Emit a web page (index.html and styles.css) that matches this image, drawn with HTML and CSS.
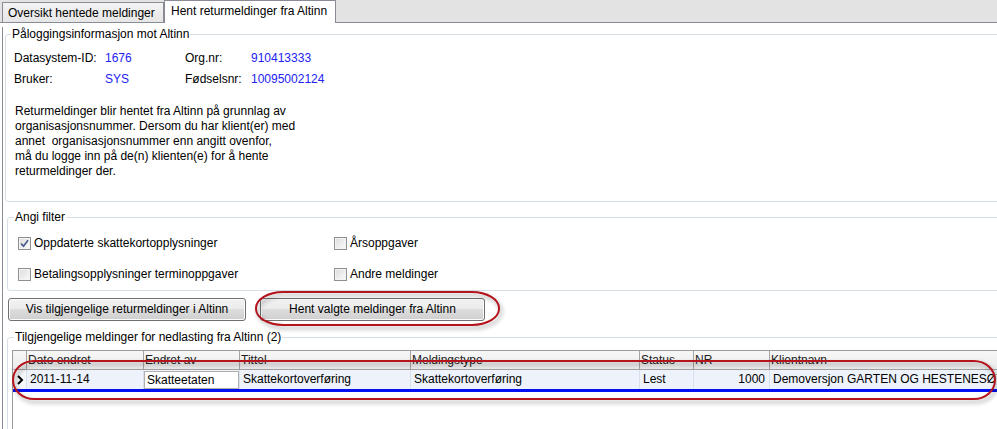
FILE: index.html
```html
<!DOCTYPE html>
<html lang="no">
<head>
<meta charset="utf-8">
<title>Hent returmeldinger fra Altinn</title>
<link rel="stylesheet" href="styles.css">
</head>
<body>
<div class="window">
  <div class="tabstrip">
    <div class="tab">Oversikt hentede meldinger</div>
    <div class="tab tab-active">Hent returmeldinger fra Altinn</div>
  </div>
  <div class="panel">
    <fieldset class="group group-login">
      <legend>Påloggingsinformasjon mot Altinn</legend>
      <div class="info">
        <span>Datasystem-ID:</span><span class="val">1676</span><span>Org.nr:</span><span class="val">910413333</span>
        <span>Bruker:</span><span class="val">SYS</span><span>Fødselsnr:</span><span class="val">10095002124</span>
      </div>
      <p class="note">Returmeldinger blir hentet fra Altinn på grunnlag av<br>organisasjonsnummer. Dersom du har klient(er) med<br>annet&nbsp; organisasjonsnummer enn angitt ovenfor,<br>må du logge inn på de(n) klienten(e) for å hente<br>returmeldinger der.</p>
    </fieldset>
    <fieldset class="group group-filter">
      <legend>Angi filter</legend>
      <div class="filters">
        <label class="check"><span class="box"><svg width="11" height="11" viewBox="0 0 11 11"><path d="M2 5.5 L4.5 8.2 L9 2.2" fill="none" stroke="#4a5c8c" stroke-width="1.7"/></svg></span>Oppdaterte skattekortopplysninger</label>
        <label class="check"><span class="box"></span>Årsoppgaver</label>
        <label class="check"><span class="box"></span>Betalingsopplysninger terminoppgaver</label>
        <label class="check"><span class="box"></span>Andre meldinger</label>
      </div>
    </fieldset>
    <div class="actions">
      <button class="btn btn-vis">Vis tilgjengelige returmeldinger i Altinn</button>
      <span class="marked"><button class="btn btn-hent">Hent valgte meldinger fra Altinn</button><span class="ring ring-btn"></span></span>
    </div>
    <fieldset class="group group-list">
      <legend>Tilgjengelige meldinger for nedlasting fra Altinn (2)</legend>
      <div class="grid">
        <div class="row head">
          <div class="cell rh"></div>
          <div class="cell">Dato endret</div>
          <div class="cell">Endret av</div>
          <div class="cell">Tittel</div>
          <div class="cell">Meldingstype</div>
          <div class="cell">Status</div>
          <div class="cell">NR</div>
          <div class="cell">Klientnavn</div>
        </div>
        <div class="row data">
          <div class="cell rh"><svg width="7" height="10" viewBox="0 0 7 10"><path d="M1 1 L5 5 L1 9" fill="none" stroke="#000" stroke-width="2"/></svg></div>
          <div class="cell">2011-11-14</div>
          <div class="cell cell-edit"><div class="edit">Skatteetaten</div></div>
          <div class="cell">Skattekortoverføring</div>
          <div class="cell">Skattekortoverføring</div>
          <div class="cell">Lest</div>
          <div class="cell num">1000</div>
          <div class="cell">Demoversjon GARTEN OG HESTENESØY AS</div>
        </div>
        <span class="ring ring-row"></span>
      </div>
    </fieldset>
  </div>
</div>
</body>
</html>
```

FILE: styles.css
```css
* { box-sizing: border-box; }

html, body {
  margin: 0;
  padding: 0;
}

body {
  width: 997px;
  height: 429px;
  overflow: hidden;
  background: #ffffff;
  font-family: "Liberation Sans", Arial, sans-serif;
  font-size: 12px;
  color: #000;
}

.window {
  width: 997px;
  height: 429px;
  overflow: hidden;
}

.tabstrip {
  display: flex;
  align-items: flex-end;
  height: 23px;
  padding-left: 2px;
  background: #e3e3e3;
  border-bottom: 1px solid #898c95;
}

.tab {
  height: 20px;
  padding: 3px 6px 0 5px;
  line-height: 15px;
  white-space: nowrap;
  border: 1px solid #898c95;
  border-bottom: none;
  background: linear-gradient(#f3f3f3, #e6e6e6);
  width: 162px;
}

.tab-active {
  height: 23px;
  margin-bottom: -1px;
  padding: 3px 6px 0 6px;
  width: 172px;
  background: #ffffff;
  position: relative;
  z-index: 1;
}

.panel {
  margin-left: 2px;
  border-left: 1px solid #898c95;
  height: 406px;
  background: #fff;
  width: 1060px;
}

.group {
  margin: 0;
  padding: 0;
  border: 1px solid #d5dfe5;
  border-radius: 3px;
  min-inline-size: 0;
  width: 1040px;
}

.group legend {
  padding: 0 1px;
  margin-left: 5px;
  line-height: 14px;
  font-size: 12px;
}

.group-login {
  margin: 4px 0 0 2px;
  padding-bottom: 22px;
}

.info {
  display: grid;
  grid-template-columns: 91px 80px 66px auto;
  row-gap: 6px;
  margin: 10px 0 0 8px;
  line-height: 15px;
}

.val {
  color: #2222f2;
}

.note {
  margin: 17px 0 0 9px;
  line-height: 15px;
}

.group-filter {
  margin: 8px 0 0 4px;
  padding-bottom: 8px;
}

.group-filter legend,
.group-list legend {
  margin-left: 6px;
}

.filters {
  display: grid;
  grid-template-columns: 316px auto;
  row-gap: 16px;
  margin: 12px 0 0 10px;
  line-height: 15px;
}

.check {
  display: flex;
  align-items: center;
  gap: 3px;
  white-space: nowrap;
}

.box {
  width: 13px;
  height: 13px;
  border: 1px solid #8e8f8f;
  background: linear-gradient(135deg, #dcdcdc, #fbfbfb);
  box-shadow: inset 0 0 0 1px #f4f4f4;
  display: flex;
  align-items: center;
  justify-content: center;
}

.actions {
  display: flex;
  gap: 14px;
  margin: 7px 0 0 5px;
}

.btn {
  height: 23px;
  margin: 0;
  padding: 0;
  border: 1px solid #707070;
  border-radius: 3px;
  background: linear-gradient(#f2f2f2 0%, #ebebeb 50%, #dddddd 50%, #cfcfcf 100%);
  box-shadow: inset 0 0 0 1px #fbfbfb;
  font-family: "Liberation Sans", Arial, sans-serif;
  font-size: 12px;
  color: #000;
  line-height: 15px;
}

.btn-vis { width: 238px; }
.btn-hent { width: 225px; display: block; }

.marked {
  position: relative;
  display: inline-block;
}

.ring {
  position: absolute;
  border: 2px solid #b5141d;
  filter: drop-shadow(2px 3px 2px rgba(0, 0, 0, 0.35));
  pointer-events: none;
}

.ring-btn {
  left: -5px;
  top: -7px;
  width: 245px;
  height: 35px;
  border-radius: 28px / 17px;
}

.group-list {
  margin: 9px 0 0 4px;
  height: 120px;
}

.grid {
  position: relative;
  margin: 6px 0 0 4px;
  border-left: 1px solid #9a9a9a;
  border-top: 1px solid #9a9a9a;
  height: 90px;
  background: #fff;
}

.row {
  display: grid;
  grid-template-columns: 13px 117px 96px 171px 229px 54px 76px 280px;
}

.cell {
  white-space: nowrap;
  overflow: hidden;
}

.head {
  height: 19px;
  background: linear-gradient(#f7f7f7, #ebebeb);
  border-bottom: 1px solid #a0a0a0;
}

.head .cell {
  line-height: 18px;
  padding-left: 1px;
  color: #222;
}

.head .cell + .cell {
  border-left: 1px solid #a5a5a5;
}

.data {
  height: 22px;
  background: #eef3fb;
  border-bottom: 3px solid #0010f0;
}

.data .cell {
  line-height: 19px;
  padding-left: 3px;
}

.data .cell + .cell {
  border-left: 1px solid #d9e1ec;
}

.data .rh {
  display: flex;
  align-items: center;
  padding-left: 4px;
  background: #f5f7fb;
}

.data .num {
  text-align: right;
  padding-right: 4px;
}

.data .cell-edit {
  padding: 1px 0 0 0;
}

.edit {
  height: 18px;
  line-height: 16px;
  border: 1px solid #b0b0b0;
  background: #fff;
  padding-left: 2px;
}

.ring-row {
  left: -1px;
  top: 9px;
  width: 984px;
  height: 40px;
  border-radius: 22px / 20px;
}
```
